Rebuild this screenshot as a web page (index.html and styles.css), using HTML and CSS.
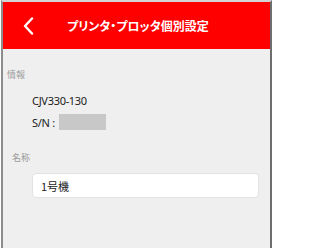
FILE: index.html
```html
<!DOCTYPE html>
<html lang="ja">
<head>
<meta charset="utf-8">
<meta name="viewport" content="width=275">
<link rel="stylesheet" href="styles.css">
</head>
<body>
<div class="frame">
  <header class="bar">
    <span class="back">
      <svg width="11" height="18" viewBox="0 0 11 18"><path d="M9 1.5 L2 9 L9 16.5" fill="none" stroke="#fff" stroke-width="2.4" stroke-linecap="round" stroke-linejoin="round"/></svg>
    </span>
    <h1 class="title">プリンタ・プロッタ個別設定</h1>
  </header>
  <main class="content">
    <div class="label label-info">情報</div>
    <div class="info">
      <div class="model">CJV330-130</div>
      <div class="sn"><span>S/N :</span><span class="mask"></span></div>
    </div>
    <div class="label label-name">名称</div>
    <div class="field">1号機</div>
  </main>
</div>
</body>
</html>
```
FILE: styles.css
```css
html, body {
  margin: 0;
  padding: 0;
  background: #ffffff;
}
body {
  width: 275px;
  font-family: "Noto Sans", "Noto Sans CJK JP", sans-serif;
}
.frame {
  width: 271px;
  margin: 0 0 0 1px;
  height: 248px;
  border-top: 2px solid #d4d4d4;
  border-left: 2px solid #8c8c8c;
  border-right: 2px solid #6e6e6e;
  background: #efefef;
  box-sizing: border-box;
  display: flex;
  flex-direction: column;
}
.bar {
  height: 47px;
  background: #ff0000;
  display: flex;
  align-items: center;
  padding-left: 20px;
}
.back {
  display: flex;
  width: 11px;
  height: 18px;
}
.title {
  margin: 0 0 0 33px;
  color: #ffffff;
  font-family: "Noto Sans CJK JP", sans-serif;
  font-size: 12px;
  font-weight: 700;
  font-feature-settings: "palt";
  letter-spacing: 0;
  white-space: nowrap;
}
.content {
  display: flex;
  flex-direction: column;
}
.label {
  font-family: "Noto Sans CJK JP", sans-serif;
  font-size: 9px;
  color: #9a9a9a;
  line-height: 12px;
}
.label-info {
  margin: 20px 0 0 4px;
}
.info {
  margin: 12px 0 0 29px;
  display: flex;
  flex-direction: column;
  gap: 6px;
  font-size: 11px;
  color: #222222;
  letter-spacing: -0.3px;
}
.model {
  line-height: 15px;
}
.sn {
  display: flex;
  align-items: center;
  gap: 4px;
  line-height: 15px;
}
.mask {
  width: 47px;
  height: 16px;
  background: #c8c8c8;
}
.label-name {
  margin: 22px 0 0 9px;
}
.field {
  margin: 9px 11px 0 29px;
  height: 25px;
  box-sizing: border-box;
  background: #ffffff;
  border: 1px solid #e2e2e2;
  border-radius: 4px;
  padding: 0 8px;
  display: flex;
  align-items: center;
  font-family: "Noto Sans CJK JP", sans-serif;
  font-size: 11px;
  color: #222222;
}
```
